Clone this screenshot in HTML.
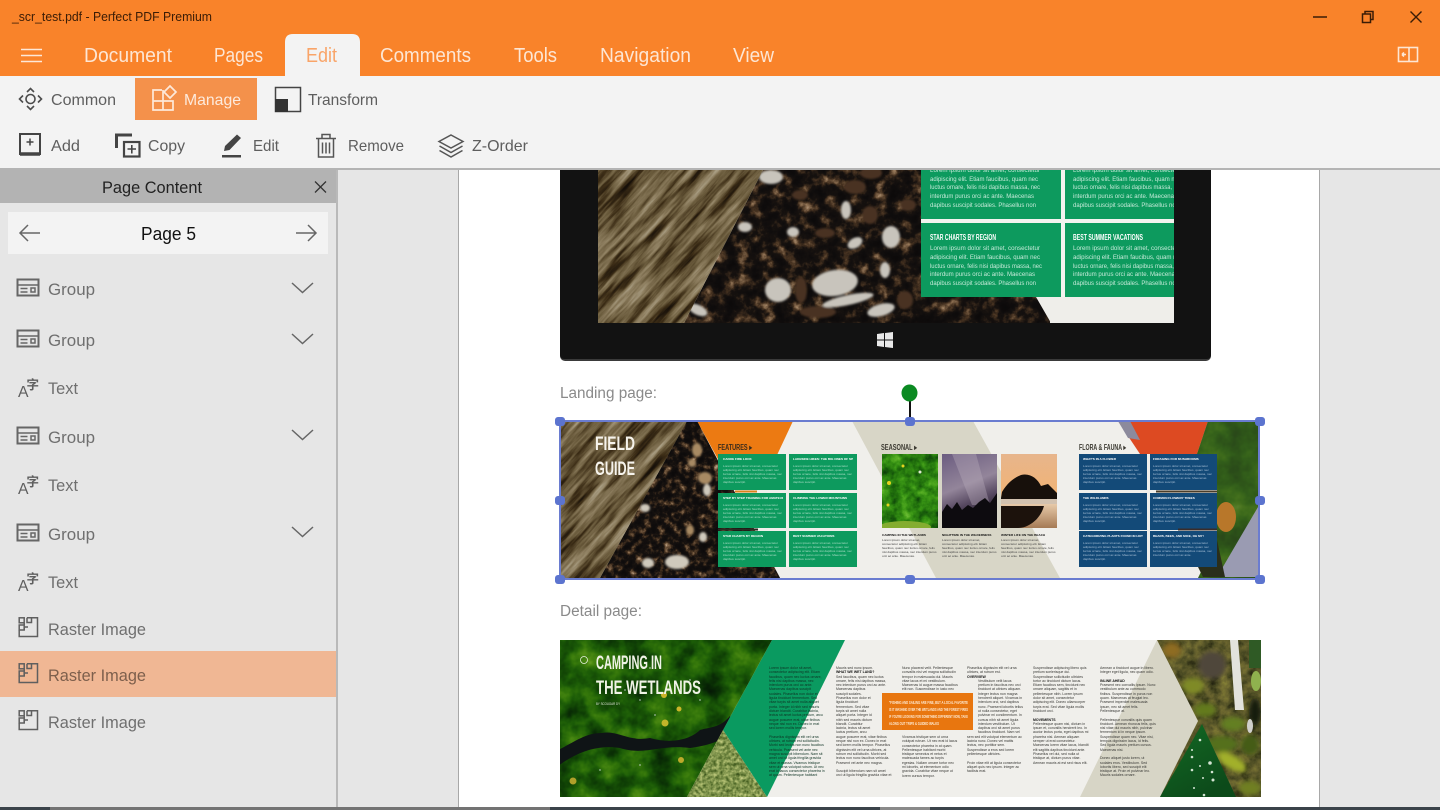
<!DOCTYPE html>
<html><head><meta charset="utf-8"><title>Perfect PDF Premium</title>
<style>
html,body{margin:0;padding:0;background:#e6e6e6;width:1440px;height:810px;overflow:hidden;font-family:"Liberation Sans",sans-serif}
svg{position:absolute;left:0;top:0}
svg text{font-family:"Liberation Sans",sans-serif}
.n{font-family:"Liberation Sans Narrow","Liberation Sans",sans-serif!important}
#tiny{position:absolute;left:0;top:0;width:1440px;height:810px;filter:blur(.35px)}
.c{position:absolute;width:60px;height:32px;overflow:hidden;font-size:3.1px;line-height:4.1px;color:#a9dcc4}
.c b{display:block;color:#fff;font-size:3.1px;line-height:4px;margin-bottom:3px;white-space:nowrap}
.u{color:#a6bdd4}
.k{position:absolute;overflow:hidden;font-size:3.1px;line-height:4px;color:#444;width:55px;height:30px}
.k b{display:block;color:#111;white-space:nowrap;margin-bottom:1px}
.d{position:absolute;overflow:hidden;font-size:3.5px;line-height:4.3px;color:#383835;width:56px;height:111px}
.d b{color:#111}
</style></head><body>
<svg width="1440" height="810" viewBox="0 0 1440 810" xmlns="http://www.w3.org/2000/svg">
<defs>
<filter id="bark" x="0" y="0" width="1" height="1" color-interpolation-filters="sRGB"><feTurbulence type="fractalNoise" baseFrequency=".014 .14" numOctaves="5" seed="3"/><feColorMatrix values="1 0 0 0 0 1 0 0 0 0 1 0 0 0 0 0 0 0 0 1"/><feComponentTransfer><feFuncR type="table" tableValues=".06 .1 .24 .42 .56 .68 .8"/><feFuncG type="table" tableValues=".05 .07 .18 .36 .5 .64 .76"/><feFuncB type="table" tableValues=".03 .04 .09 .24 .38 .54 .68"/></feComponentTransfer></filter>
<filter id="peb" x="0" y="0" width="1" height="1" color-interpolation-filters="sRGB"><feTurbulence type="fractalNoise" baseFrequency=".08" numOctaves="4" seed="8"/><feColorMatrix values="1 0 0 0 0 1 0 0 0 0 1 0 0 0 0 0 0 0 0 1"/><feComponentTransfer><feFuncR type="table" tableValues=".04 .05 .06 .09 .28 .58 .85"/><feFuncG type="table" tableValues=".04 .04 .05 .07 .2 .46 .8"/><feFuncB type="table" tableValues=".04 .04 .05 .06 .13 .34 .75"/></feComponentTransfer></filter>
<filter id="peb2" x="0" y="0" width="1" height="1" color-interpolation-filters="sRGB"><feTurbulence type="fractalNoise" baseFrequency=".14" numOctaves="4" seed="8"/><feColorMatrix values="1 0 0 0 0 1 0 0 0 0 1 0 0 0 0 0 0 0 0 1"/><feComponentTransfer><feFuncR type="table" tableValues=".04 .05 .06 .09 .28 .58 .85"/><feFuncG type="table" tableValues=".04 .04 .05 .07 .2 .46 .8"/><feFuncB type="table" tableValues=".04 .04 .05 .06 .13 .34 .75"/></feComponentTransfer></filter>
<filter id="moss" x="0" y="0" width="1" height="1" color-interpolation-filters="sRGB"><feTurbulence type="fractalNoise" baseFrequency=".04" numOctaves="4" seed="5"/><feColorMatrix values="1 0 0 0 0 1 0 0 0 0 1 0 0 0 0 0 0 0 0 1"/><feComponentTransfer><feFuncR type="table" tableValues=".02 .03 .06 .11 .2 .32 .5"/><feFuncG type="table" tableValues=".08 .15 .25 .36 .46 .56 .68"/><feFuncB type="table" tableValues=".02 .02 .02 .03 .04 .08 .26"/></feComponentTransfer></filter>
<filter id="moss2" x="0" y="0" width="1" height="1" color-interpolation-filters="sRGB"><feTurbulence type="fractalNoise" baseFrequency=".09" numOctaves="4" seed="14"/><feColorMatrix values="1 0 0 0 0 1 0 0 0 0 1 0 0 0 0 0 0 0 0 1"/><feComponentTransfer><feFuncR type="table" tableValues=".03 .06 .13 .22 .36 .6"/><feFuncG type="table" tableValues=".16 .28 .44 .58 .7 .82"/><feFuncB type="table" tableValues=".03 .04 .05 .08 .15 .4"/></feComponentTransfer></filter>
<filter id="flw" x="0" y="0" width="1" height="1" color-interpolation-filters="sRGB"><feTurbulence type="fractalNoise" baseFrequency=".3" numOctaves="2" seed="2"/><feColorMatrix values="1 0 0 0 0 1 0 0 0 0 1 0 0 0 0 0 0 0 0 1"/><feComponentTransfer><feFuncR type="table" tableValues=".15 .3 .5 .7 .85"/><feFuncG type="table" tableValues=".22 .4 .58 .75 .85"/><feFuncB type="table" tableValues=".08 .15 .3 .45 .6"/></feComponentTransfer></filter>
<filter id="rock" x="0" y="0" width="1" height="1" color-interpolation-filters="sRGB"><feTurbulence type="fractalNoise" baseFrequency=".1" numOctaves="4" seed="11"/><feColorMatrix values="1 0 0 0 0 1 0 0 0 0 1 0 0 0 0 0 0 0 0 1"/><feComponentTransfer><feFuncR type="table" tableValues=".1 .18 .3 .4 .48 .6"/><feFuncG type="table" tableValues=".1 .18 .3 .38 .46 .6"/><feFuncB type="table" tableValues=".05 .08 .14 .18 .2 .24"/></feComponentTransfer></filter>
<filter id="sb" x="-30%" y="-30%" width="160%" height="160%"><feGaussianBlur stdDeviation="1.1"/></filter>
<filter id="sb2" x="-30%" y="-30%" width="160%" height="160%"><feGaussianBlur stdDeviation="2.5"/></filter>
<clipPath id="docClip"><rect x="459" y="170" width="860" height="640"/></clipPath>
<clipPath id="tBark"><polygon points="598,170 763,170 684,323 598,323"/></clipPath>
<clipPath id="tPeb"><polygon points="763,170 1050,170 1050,323 684,323"/></clipPath>
<clipPath id="lBark"><polygon points="560,421 687,421 600,578 560,578"/></clipPath>
<clipPath id="dMoss"><polygon points="560,640 772,640 723,730 687,797 560,797"/></clipPath>
<clipPath id="dFlw"><polygon points="723,730 767,797 687,797"/></clipPath>
<clipPath id="dRight"><polygon points="1157,640 1261,640 1261,797 1160,797 1198,721"/></clipPath>
<clipPath id="lMoss"><rect x="882" y="454" width="56" height="74"/></clipPath>
<clipPath id="lRight"><polygon points="1208,421 1259,421 1259,578 1198,578 1217,540 1217,454 1197,454"/></clipPath>
<linearGradient id="sky" x1="0" y1="0" x2=".3" y2="1"><stop offset="0" stop-color="#6b5c80"/><stop offset=".5" stop-color="#93859a"/><stop offset=".75" stop-color="#55475f"/><stop offset="1" stop-color="#221c26"/></linearGradient>
<linearGradient id="sun" x1="0" y1="0" x2="0" y2="1"><stop offset="0" stop-color="#e7b58c"/><stop offset=".5" stop-color="#f0b477"/><stop offset=".68" stop-color="#e6c9a8"/><stop offset="1" stop-color="#a57a55"/></linearGradient>
<linearGradient id="leaf" x1="0" y1="0" x2=".6" y2="1"><stop offset="0" stop-color="#136a24"/><stop offset="1" stop-color="#0c4a1a"/></linearGradient>
<g id="ig" fill="none" stroke="#666"><rect x="1" y="1" width="21" height="16" stroke-width="2"/><path d="M2 6.500H21M4 10H11M4 13.500H11" stroke-width="1.600"/><rect x="14.500" y="9.500" width="4" height="4" stroke-width="1.500"/></g>
<g id="ir" fill="none" stroke="#5f5f5f" stroke-width="1.500"><path d="M9 .8H19.500V19.500H1.200V13"/><rect x="1.200" y=".8" width="5" height="5"/><rect x="1.200" y="8" width="5" height="5"/><path d="M6.200 5.800V8M9 .8V5.500H13.500V.8M6.200 13V10H10"/></g>
<g id="ch"><path d="M0 0L10.500 9.500L21 0" fill="none" stroke="#666" stroke-width="1.500"/></g>
</defs>

<rect width="1440" height="810" fill="#e6e6e6"/>
<rect x="459" y="170" width="860" height="640" fill="#fff"/>
<rect x="458" y="170" width="1" height="640" fill="#a8a8a8"/>
<rect x="1319" y="170" width="1" height="640" fill="#a8a8a8"/>

<g clip-path="url(#docClip)" style="filter:blur(.35px)">
  <rect x="560" y="100" width="651" height="261" rx="5" fill="#3a3a3a"/>
  <rect x="560" y="100" width="651" height="259" rx="4" fill="#121212"/>
  <rect x="598" y="170" width="576" height="153" fill="#f0efeb"/>
  <g clip-path="url(#tPeb)">
    <rect x="680" y="170" width="370" height="153" filter="url(#peb)"/>
    <g filter="url(#sb)">
      <g fill="#4a3320">
        <ellipse cx="801" cy="290" rx="6" ry="13"/><ellipse cx="855" cy="187" rx="11" ry="7"/><ellipse cx="871" cy="173" rx="11" ry="6"/><ellipse cx="825" cy="233" rx="10" ry="5"/><ellipse cx="905" cy="300" rx="8" ry="9"/><ellipse cx="800" cy="195" rx="8" ry="5"/><ellipse cx="870" cy="215" rx="8" ry="9"/><ellipse cx="908" cy="205" rx="8" ry="6"/><ellipse cx="818" cy="312" rx="18" ry="6"/>
      </g>
      <g fill="#c8c4bc">
        <ellipse cx="771" cy="177" rx="12" ry="7"/><ellipse cx="846" cy="210" rx="5" ry="9"/><ellipse cx="891" cy="237" rx="9" ry="11"/><ellipse cx="855" cy="243" rx="8" ry="5" transform="rotate(-30 855 243)"/><ellipse cx="885" cy="270" rx="5" ry="8"/><ellipse cx="835" cy="283" rx="23" ry="13" transform="rotate(-8 835 283)"/><ellipse cx="778" cy="290" rx="13" ry="12"/><ellipse cx="848" cy="300" rx="26" ry="5" transform="rotate(-12 848 300)"/><ellipse cx="698" cy="310" rx="10" ry="5" transform="rotate(25 698 310)"/><ellipse cx="881" cy="310" rx="14" ry="6" transform="rotate(-15 881 310)"/><ellipse cx="745" cy="227" rx="7" ry="5"/><ellipse cx="793" cy="232" rx="6" ry="5"/>
      </g>
    </g>
  </g>
  <polygon points="1036,297 1174,297 1174,323 1051,323" fill="#efeeea"/>
  <g clip-path="url(#tBark)"><rect x="400" y="50" width="540" height="400" transform="rotate(-48 670 250)" filter="url(#bark)"/></g>
  <rect x="921" y="219" width="253" height="4" fill="#f3f3ef"/>
  <rect x="921" y="170" width="140" height="49" fill="#0d9a5e"/>
  <rect x="1065" y="170" width="109" height="49" fill="#0d9a5e"/>
  <rect x="921" y="223" width="140" height="74" fill="#0d9a5e"/>
  <rect x="1065" y="223" width="109" height="74" fill="#0d9a5e"/>
  <rect x="1061" y="170" width="4" height="127" fill="#f3f3ef"/>
  <g fill="#c6ead9" font-size="6.600">
    <text x="930" y="172" textLength="110" lengthAdjust="spacingAndGlyphs">Lorem ipsum dolor sit amet, consectetur</text>
    <text x="930" y="181" textLength="108" lengthAdjust="spacingAndGlyphs">adipiscing elit. Etiam faucibus, quam nec</text>
    <text x="930" y="189" textLength="110" lengthAdjust="spacingAndGlyphs">luctus ornare, felis nisi dapibus massa, nec</text>
    <text x="930" y="198" textLength="104" lengthAdjust="spacingAndGlyphs">interdum purus orci ac ante. Maecenas</text>
    <text x="930" y="207" textLength="106" lengthAdjust="spacingAndGlyphs">dapibus suscipit sodales. Phasellus non</text>
    <text x="1073" y="172" textLength="110" lengthAdjust="spacingAndGlyphs">Lorem ipsum dolor sit amet, consectetur</text>
    <text x="1073" y="181" textLength="108" lengthAdjust="spacingAndGlyphs">adipiscing elit. Etiam faucibus, quam nec</text>
    <text x="1073" y="189" textLength="110" lengthAdjust="spacingAndGlyphs">luctus ornare, felis nisi dapibus massa, nec</text>
    <text x="1073" y="198" textLength="104" lengthAdjust="spacingAndGlyphs">interdum purus orci ac ante. Maecenas</text>
    <text x="1073" y="207" textLength="106" lengthAdjust="spacingAndGlyphs">dapibus suscipit sodales. Phasellus non</text>
    <text x="930" y="250" textLength="110" lengthAdjust="spacingAndGlyphs">Lorem ipsum dolor sit amet, consectetur</text>
    <text x="930" y="259" textLength="110" lengthAdjust="spacingAndGlyphs">adipiscing elit. Etiam faucibus, quam nec</text>
    <text x="930" y="268" textLength="112" lengthAdjust="spacingAndGlyphs">luctus ornare, felis nisi dapibus massa, nec</text>
    <text x="930" y="276" textLength="105" lengthAdjust="spacingAndGlyphs">interdum purus orci ac ante. Maecenas</text>
    <text x="930" y="285" textLength="106" lengthAdjust="spacingAndGlyphs">dapibus suscipit sodales. Phasellus non</text>
    <text x="1073" y="250" textLength="110" lengthAdjust="spacingAndGlyphs">Lorem ipsum dolor sit amet, consectetur</text>
    <text x="1073" y="259" textLength="110" lengthAdjust="spacingAndGlyphs">adipiscing elit. Etiam faucibus, quam nec</text>
    <text x="1073" y="268" textLength="112" lengthAdjust="spacingAndGlyphs">luctus ornare, felis nisi dapibus massa, nec</text>
    <text x="1073" y="276" textLength="105" lengthAdjust="spacingAndGlyphs">interdum purus orci ac ante. Maecenas</text>
    <text x="1073" y="285" textLength="106" lengthAdjust="spacingAndGlyphs">dapibus suscipit sodales. Phasellus non</text>
  </g>
  <rect x="1174" y="170" width="37" height="153" fill="#121212"/>
  <g fill="#fff" font-size="8" font-weight="bold">
    <text class="n" x="930" y="240" textLength="66" lengthAdjust="spacingAndGlyphs">STAR CHARTS BY REGION</text>
    <text class="n" x="1073" y="240" textLength="70" lengthAdjust="spacingAndGlyphs">BEST SUMMER VACATIONS</text>
  </g>
  <g fill="#e8e8e8"><polygon points="877,334 884,333 884,339.500 877,339.500"/><polygon points="885,333 893,332 893,339.500 885,339.500"/><polygon points="877,340.500 884,340.500 884,347 877,346"/><polygon points="885,340.500 893,340.500 893,348 885,347"/></g>

  <rect x="560" y="421" width="699" height="157" fill="#f0efeb"/>
  <polygon points="852,421 973,421 1060,578 936,578" fill="#d8d6c7"/>
  <polygon points="697,421 793,421 770,470 735,490" fill="#ec7a12"/>
  <polygon points="687,421 697,421 780,578 600,578" fill="#151311"/>
  <clipPath id="lPeb"><polygon points="687,421 697,421 780,578 600,578"/></clipPath>
  <g clip-path="url(#lPeb)"><rect x="590" y="421" width="195" height="157" filter="url(#peb2)"/>
    <g filter="url(#sb)">
      <g fill="#a88a63"><ellipse cx="697" cy="450" rx="5" ry="7"/><ellipse cx="705" cy="478" rx="7" ry="6"/><ellipse cx="692" cy="463" rx="4" ry="4"/><ellipse cx="690" cy="530" rx="4" ry="5"/></g>
      <g fill="#cfc9bc"><ellipse cx="677" cy="562" rx="12" ry="7"/><ellipse cx="648" cy="563" rx="6" ry="5"/><ellipse cx="645" cy="508" rx="5" ry="4"/><ellipse cx="703" cy="537" rx="4" ry="5"/><ellipse cx="707" cy="490" rx="4" ry="6"/></g>
    </g>
  </g>
  <g clip-path="url(#lBark)"><rect x="420" y="340" width="400" height="320" transform="rotate(-48 620 500)" filter="url(#bark)"/></g>
  <g fill="#0d9a5e">
    <rect x="718" y="454" width="68" height="36"/><rect x="789" y="454" width="68" height="36"/>
    <rect x="718" y="493" width="68" height="35"/><rect x="789" y="493" width="68" height="35"/>
    <rect x="718" y="531" width="68" height="36"/><rect x="789" y="531" width="68" height="36"/>
  </g>
  <rect x="735" y="490.500" width="22" height="2" fill="#d9831c"/>
  <rect x="718" y="528.500" width="40" height="2" fill="#2b2a22"/>
  <g clip-path="url(#lMoss)"><rect x="882" y="454" width="56" height="74" filter="url(#moss2)"/><ellipse cx="905" cy="527" rx="26" ry="6" fill="#84ad30"/><circle cx="889" cy="483" r="2" fill="#e5d31f"/><circle cx="903" cy="466" r="1.500" fill="#e5d31f"/><circle cx="888" cy="505" r="1.500" fill="#e5d31f"/><circle cx="920" cy="472" r="1.500" fill="#dfe9d0"/></g>
  <rect x="942" y="454" width="55" height="74" fill="url(#sky)"/>
  <polygon points="952,454 976,454 990,505 972,505" fill="#b6abb8" opacity=".4"/>
  <polygon points="942,528 942,512 947,504 952,509 957,502 962,510 968,505 973,508 979,502 985,498 990,503 997,493 997,528" fill="#0d0b0f"/>
  <rect x="1001" y="454" width="56" height="74" fill="url(#sun)"/>
  <path d="M1001 498 L1002 492 C1008 482 1014 478 1021 475 C1030 473 1037 478 1041 486 L1048 484 L1057 493 V499 H1001Z" fill="#17100b"/>
  <rect x="1001" y="499" width="56" height="5" fill="#d2c2b0"/>
  <path d="M1001 506 H1044 C1040 520 1028 528 1018 528 H1001Z" fill="#1c120c"/>
  <polygon points="1118,421 1208,421 1197,454 1140,454" fill="#dd4a22"/>
  <polygon points="1118,421 1130,421 1140,440 1128,438" fill="#8c8a9c"/>
  <g clip-path="url(#lRight)"><rect x="1190" y="421" width="70" height="160" fill="#46622a"/><rect x="1190" y="421" width="70" height="160" filter="url(#moss)" opacity=".45"/><ellipse cx="1226" cy="517" rx="10" ry="15" fill="#b8772a"/></g>
  <polygon points="1217,577 1258,507 1258,577" fill="#9a9bb2"/>
  <polygon points="1198,567 1217,540 1225,577 1203,577" fill="#2a2e1a"/>
  <g fill="#134a78">
    <rect x="1079" y="454" width="68" height="36"/><rect x="1150" y="454" width="67" height="36"/>
    <rect x="1079" y="493" width="68" height="37"/><rect x="1150" y="493" width="67" height="37"/>
    <rect x="1079" y="531" width="68" height="36"/><rect x="1150" y="531" width="67" height="36"/>
  </g>
  <rect x="1156" y="490.500" width="61" height="2" fill="#4a3d2a"/>
  <rect x="1178" y="528.500" width="39" height="2" fill="#3a2c2a"/>
  <text class="n" x="595" y="450" fill="#f6f3ec" font-size="19" font-weight="bold" textLength="40" lengthAdjust="spacingAndGlyphs">FIELD</text>
  <text class="n" x="595" y="475" fill="#f6f3ec" font-size="19" font-weight="bold" textLength="40" lengthAdjust="spacingAndGlyphs">GUIDE</text>
  <text class="n" x="718" y="450" fill="#3a2c1c" font-size="8" font-weight="bold" textLength="34" lengthAdjust="spacingAndGlyphs">FEATURES ▸</text>
  <text class="n" x="881" y="450" fill="#3c3a32" font-size="8" font-weight="bold" textLength="36" lengthAdjust="spacingAndGlyphs">SEASONAL ▸</text>
  <text class="n" x="1079" y="450" fill="#3c3a32" font-size="8" font-weight="bold" textLength="47" lengthAdjust="spacingAndGlyphs">FLORA &amp; FAUNA ▸</text>

  <rect x="560" y="640" width="701" height="157" fill="#f0efeb"/>
  <polygon points="1157,640 1198,721 1160,797 1080,797" fill="#d7d5c6"/>
  <polygon points="772,640 845,640 767,797 723,730" fill="#0a9a60"/>
  <g clip-path="url(#dMoss)">
    <rect x="560" y="640" width="215" height="157" filter="url(#moss)"/>
    <path d="M558 750 C575 742 585 733 602 733 C618 730 628 742 650 738 C670 744 690 740 700 730 C710 727 720 728 730 716 L735 730 C722 742 705 746 690 748 C660 744 645 756 620 748 C600 745 580 750 558 766Z" fill="#0f1416"/>
    <g fill="#cfd8d8" opacity=".55"><circle cx="650" cy="668" r="1"/><circle cx="690" cy="680" r="1"/><circle cx="640" cy="700" r="1"/><circle cx="700" cy="700" r="1"/><circle cx="655" cy="715" r="1"/><circle cx="625" cy="690" r="1"/><circle cx="640" cy="765" r="1"/><circle cx="600" cy="770" r="1"/></g>
    <circle cx="664" cy="695" r="3" fill="#cbb52a"/><circle cx="679" cy="709" r="2.500" fill="#cbb52a"/><circle cx="665" cy="723" r="3.500" fill="#c2b52a"/><circle cx="681" cy="760" r="3" fill="#bda92b"/><circle cx="573" cy="781" r="3.500" fill="#b0a02a"/>
  </g>
  <g clip-path="url(#dFlw)"><rect x="685" y="728" width="84" height="70" filter="url(#flw)"/></g>
  <g clip-path="url(#dRight)">
    <rect x="1150" y="640" width="112" height="160" filter="url(#rock)"/>
    <g filter="url(#sb2)">
      <ellipse cx="1172" cy="650" rx="9" ry="8" fill="#8e6c24"/>
      <ellipse cx="1193" cy="686" rx="11" ry="8" fill="#7f8a26"/>
      <ellipse cx="1205" cy="710" rx="11" ry="7" fill="#647a1f"/>
      <ellipse cx="1233" cy="724" rx="12" ry="7" fill="#647f22"/>
      <ellipse cx="1222" cy="744" rx="16" ry="8" fill="#55701d"/>
      <ellipse cx="1232" cy="762" rx="16" ry="7" transform="rotate(30 1232 762)" fill="#a2b02b"/>
      <ellipse cx="1250" cy="745" rx="9" ry="10" fill="#445c18"/>
      <ellipse cx="1250" cy="788" rx="11" ry="7" fill="#6f7f24"/>
      <ellipse cx="1255" cy="712" rx="6" ry="14" fill="#161a10"/>
      <ellipse cx="1212" cy="665" rx="14" ry="14" fill="#50463a"/>
    </g>
    <polygon points="1230,640 1238,640 1244,710 1235,710" fill="#e2e2dc"/>
    <rect x="1249" y="640" width="12" height="28" fill="#2f5a25"/>
    <ellipse cx="1256" cy="681" rx="5" ry="10" fill="#8fb14e"/>
    <ellipse cx="1250" cy="726" rx="3" ry="7" fill="#d0d0cc"/>
  </g>
  <polygon points="1202,724 1160,797 1236,797" fill="url(#leaf)"/>
  <g fill="#d4e4d4"><circle cx="1200" cy="740" r="1.300"/><circle cx="1192" cy="750" r="1"/><circle cx="1192" cy="757" r="1.300"/><circle cx="1192" cy="770" r="1.300"/><circle cx="1210" cy="763" r="1.800"/><circle cx="1212" cy="772" r="1.300"/><circle cx="1213" cy="780" r="1.500"/><circle cx="1200" cy="766" r="1"/><circle cx="1203" cy="778" r="1"/><circle cx="1204" cy="795" r="1.300"/><circle cx="1194" cy="788" r="1"/></g>
  <rect x="882" y="693" width="91" height="37" fill="#e8760f"/>
  <circle cx="584" cy="660" r="3.500" fill="none" stroke="#e8efe0" stroke-width=".8"/>
  <text class="n" x="596" y="669" fill="#f0f3e6" font-size="19" font-weight="bold" textLength="66" lengthAdjust="spacingAndGlyphs">CAMPING IN</text>
  <text class="n" x="596" y="694" fill="#f0f3e6" font-size="19" font-weight="bold" textLength="105" lengthAdjust="spacingAndGlyphs">THE WETLANDS</text>
  <text x="596" y="705" fill="#e2e8d8" font-size="3.600" textLength="24" lengthAdjust="spacingAndGlyphs">BY SCOUGAR DY</text>
  <g fill="#fde8d0" font-size="4.200" font-weight="bold">
    <text x="889" y="704" textLength="79" lengthAdjust="spacingAndGlyphs">"FISHING AND SAILING ARE FINE, BUT A LOCAL FAVORITE</text>
    <text x="889" y="711" textLength="79" lengthAdjust="spacingAndGlyphs">IS IT WASHING OVER THE WETLANDS AND THE FOREST FIRES</text>
    <text x="889" y="718" textLength="79" lengthAdjust="spacingAndGlyphs">IF YOU'RE LOOKING FOR SOMETHING DIFFERENT NOW, TAKE</text>
    <text x="889" y="725" textLength="50" lengthAdjust="spacingAndGlyphs">ALONG OUT TRIPS &amp; GUIDED WALKS</text>
  </g>
</g>

<rect y="807" width="1440" height="3" fill="#3b434a"/>
<rect x="50" y="807" width="500" height="3" fill="#737373"/>
<rect x="880" y="807" width="50" height="3" fill="#8a8a8a"/>

<rect x="560" y="421" width="699" height="158" fill="none" stroke="#6a7cd0" stroke-width="2"/>
<path d="M910 400V421" stroke="#111" stroke-width="2"/>
<ellipse cx="909.500" cy="393" rx="8" ry="8.500" fill="#0b8a22"/>
<g fill="#5c74cf">
  <rect x="555" y="417" width="10" height="9" rx="3"/><rect x="905" y="417" width="10" height="9" rx="3"/><rect x="1255" y="417" width="10" height="9" rx="3"/>
  <rect x="555" y="496" width="10" height="9" rx="3"/><rect x="1255" y="496" width="10" height="9" rx="3"/>
  <rect x="555" y="575" width="10" height="9" rx="3"/><rect x="905" y="575" width="10" height="9" rx="3"/><rect x="1255" y="575" width="10" height="9" rx="3"/>
</g>
<text x="560" y="398" fill="#8a8a8a" font-size="15.500" textLength="97" lengthAdjust="spacingAndGlyphs">Landing page:</text>
<text x="560" y="616" fill="#8a8a8a" font-size="15.500" textLength="82" lengthAdjust="spacingAndGlyphs">Detail page:</text>

<rect width="1440" height="76" fill="#f9832a"/>
<text x="12" y="21" font-size="12.500" fill="#3a1c06" textLength="200" lengthAdjust="spacingAndGlyphs">_scr_test.pdf - Perfect PDF Premium</text>
<path d="M1313 17H1327" stroke="#3a1c06" stroke-width="1.500"/>
<g fill="none" stroke="#3a1c06" stroke-width="1.500"><rect x="1362.500" y="14" width="8" height="8.500"/><path d="M1365 13.500V11.500H1373V19.500H1371"/><path d="M1410.500 11.500L1421.500 22.500M1421.500 11.500L1410.500 22.500" stroke-width="1.400"/></g>
<path d="M21 49.500H42M21 55.500H42M21 61.500H42" stroke="#fde8d8" stroke-width="1.500"/>
<path d="M285 76V42Q285 34 293 34H352Q360 34 360 42V76Z" fill="#f3f3f3"/>
<g font-size="20" fill="#fde6d4">
  <text x="84" y="62" textLength="88" lengthAdjust="spacingAndGlyphs">Document</text>
  <text x="214" y="62" textLength="49" lengthAdjust="spacingAndGlyphs">Pages</text>
  <text x="380" y="62" textLength="91" lengthAdjust="spacingAndGlyphs">Comments</text>
  <text x="514" y="62" textLength="43" lengthAdjust="spacingAndGlyphs">Tools</text>
  <text x="600" y="62" textLength="91" lengthAdjust="spacingAndGlyphs">Navigation</text>
  <text x="733" y="62" textLength="41" lengthAdjust="spacingAndGlyphs">View</text>
  <text x="306" y="62" textLength="31" lengthAdjust="spacingAndGlyphs" fill="#f9a468">Edit</text>
</g>
<g fill="none" stroke="#fde6d4" stroke-width="1.600"><rect x="1398.500" y="47.500" width="19" height="14"/><path d="M1409 47.500V61.500M1402 54.500H1406M1402 54.500L1404 52.500M1402 54.500L1404 56.500"/></g>

<rect y="76" width="1440" height="92" fill="#f3f3f3"/>
<rect y="168" width="1440" height="2" fill="#b4b4b4"/>
<rect x="135" y="78" width="122" height="42" fill="#f4914b"/>
<g fill="none" stroke="#4d4d4d" stroke-width="1.600">
  <circle cx="30.500" cy="99" r="4.500"/>
  <path d="M27 92L30.500 88.500L34 92M27 106L30.500 109.500L34 106M23 95.500L19.500 99L23 102.500M38 95.500L41.500 99L38 102.500"/>
</g>
<g fill="none" stroke="#fde9da" stroke-width="1.700">
  <path d="M162 90H153V110H173V101H153M163 90V110M163 101H173"/>
  <path d="M170 86L176 92L170 98L164 92Z"/>
</g>
<rect x="275.500" y="87.500" width="25" height="24" fill="none" stroke="#444" stroke-width="1.500"/>
<rect x="275" y="99" width="13" height="13" fill="#333"/>
<g fill="none" stroke="#444">
  <path d="M20 154V134H40V154Z" stroke-width="2"/><path d="M20 154H40" stroke-width="3.500"/><path d="M26.500 142H33.500M30 138.500V145.500" stroke-width="1.500"/>
  <path d="M116.500 148V135H132" stroke-width="3"/><rect x="124" y="142" width="15.500" height="14.500" stroke-width="2.200"/><path d="M127.500 149H136M131.800 145V153.500" stroke-width="1.600"/>
</g>
<path d="M224 151L225 146L237 134.500L241 138L229.500 150Z" fill="#444"/>
<rect x="222" y="155" width="19" height="2.500" fill="#444"/>
<g fill="none" stroke="#555" stroke-width="1.500">
  <path d="M316 138.500H336M322 138V134.500H330V138M318.500 139V157H333.500V139M322.500 142.500V153.500M326 142.500V153.500M329.500 142.500V153.500"/>
  <path d="M451 135L463 141.500L451 148L439 141.500Z"/><path d="M439.500 146L451 152.500L462.500 146M439.500 150.500L451 157L462.500 150.500"/>
</g>
<g font-size="16" fill="#5e5e5e">
  <text x="51" y="105" textLength="65" lengthAdjust="spacingAndGlyphs">Common</text>
  <text x="184" y="105" textLength="57" lengthAdjust="spacingAndGlyphs" fill="#fdeadc">Manage</text>
  <text x="308" y="105" textLength="70" lengthAdjust="spacingAndGlyphs">Transform</text>
  <text x="51" y="151" textLength="29" lengthAdjust="spacingAndGlyphs">Add</text>
  <text x="148" y="151" textLength="37" lengthAdjust="spacingAndGlyphs">Copy</text>
  <text x="253" y="151" textLength="26" lengthAdjust="spacingAndGlyphs">Edit</text>
  <text x="348" y="151" textLength="56" lengthAdjust="spacingAndGlyphs">Remove</text>
  <text x="472" y="151" textLength="56" lengthAdjust="spacingAndGlyphs">Z-Order</text>
</g>

<rect y="170" width="336" height="637" fill="#e6e6e6"/>
<rect x="336" y="170" width="2" height="637" fill="#b9b9b9"/>
<rect y="170" width="336" height="33" fill="#b3b3b3"/>
<text x="102" y="193" font-size="16.500" fill="#222" textLength="100" lengthAdjust="spacingAndGlyphs">Page Content</text>
<path d="M315 181.500L326 192.500M326 181.500L315 192.500" stroke="#333" stroke-width="1.300"/>
<rect x="8" y="212" width="320" height="42" fill="#f3f3f3"/>
<text x="141" y="240" font-size="18" fill="#111" textLength="55" lengthAdjust="spacingAndGlyphs">Page 5</text>
<path d="M40 233H20M28 225L20 233L28 241M296 233H316M308 225L316 233L308 241" fill="none" stroke="#666" stroke-width="1.500"/>
<rect y="651" width="336" height="46" fill="#f0b794"/>
<use href="#ig" x="16.500" y="278.500"/><use href="#ig" x="16.500" y="329.500"/><use href="#ig" x="16.500" y="426.500"/><use href="#ig" x="16.500" y="523.500"/>
<use href="#ch" x="292" y="283"/><use href="#ch" x="292" y="334"/><use href="#ch" x="292" y="430"/><use href="#ch" x="292" y="527"/>
<use href="#ir" x="18" y="617"/><use href="#ir" x="18" y="663"/><use href="#ir" x="18" y="710"/>
<g font-size="17" fill="#6f6f6f">
  <text x="48" y="295" textLength="47" lengthAdjust="spacingAndGlyphs">Group</text>
  <text x="48" y="346" textLength="47" lengthAdjust="spacingAndGlyphs">Group</text>
  <text x="48" y="394" textLength="30" lengthAdjust="spacingAndGlyphs">Text</text>
  <text x="48" y="443" textLength="47" lengthAdjust="spacingAndGlyphs">Group</text>
  <text x="48" y="491" textLength="30" lengthAdjust="spacingAndGlyphs">Text</text>
  <text x="48" y="540" textLength="47" lengthAdjust="spacingAndGlyphs">Group</text>
  <text x="48" y="588" textLength="30" lengthAdjust="spacingAndGlyphs">Text</text>
  <text x="48" y="635" textLength="98" lengthAdjust="spacingAndGlyphs">Raster Image</text>
  <text x="48" y="681" textLength="98" lengthAdjust="spacingAndGlyphs" fill="#7d5f4c">Raster Image</text>
  <text x="48" y="728" textLength="98" lengthAdjust="spacingAndGlyphs">Raster Image</text>
</g>
<g fill="#5f5f5f">
  <text x="18" y="397" font-size="16" textLength="10.500" lengthAdjust="spacingAndGlyphs">A</text>
  <text x="26.500" y="389" font-size="12.500" font-weight="bold" style='font-family:"Noto Sans CJK SC",sans-serif'>字</text>
  <text x="18" y="494" font-size="16" textLength="10.500" lengthAdjust="spacingAndGlyphs">A</text>
  <text x="26.500" y="486" font-size="12.500" font-weight="bold" style='font-family:"Noto Sans CJK SC",sans-serif'>字</text>
  <text x="18" y="591" font-size="16" textLength="10.500" lengthAdjust="spacingAndGlyphs">A</text>
  <text x="26.500" y="583" font-size="12.500" font-weight="bold" style='font-family:"Noto Sans CJK SC",sans-serif'>字</text>
</g>
</svg>

<div id="tiny">
<div class="c" style="left:723px;top:457px"><b>CANOE FIRE LOCK</b>Lorem ipsum dolor sit amet, consectetur adipiscing elit. Etiam faucibus, quam nec luctus ornare, felis nisi dapibus massa, nec interdum purus orci ac ante. Maecenas dapibus suscipit.</div>
<div class="c" style="left:793px;top:457px"><b>LAKESIDE HIKES: THE BIG ONES OF SPRING</b>Lorem ipsum dolor sit amet, consectetur adipiscing elit. Etiam faucibus, quam nec luctus ornare, felis nisi dapibus massa, nec interdum purus orci ac ante. Maecenas dapibus suscipit.</div>
<div class="c" style="left:723px;top:496px"><b>STEP BY STEP TRAINING FOR AMATEUR HIKERS</b>Lorem ipsum dolor sit amet, consectetur adipiscing elit. Etiam faucibus, quam nec luctus ornare, felis nisi dapibus massa, nec interdum purus orci ac ante. Maecenas dapibus suscipit.</div>
<div class="c" style="left:793px;top:496px"><b>CLIMBING THE LOWER MOUNTAINS</b>Lorem ipsum dolor sit amet, consectetur adipiscing elit. Etiam faucibus, quam nec luctus ornare, felis nisi dapibus massa, nec interdum purus orci ac ante. Maecenas dapibus suscipit.</div>
<div class="c" style="left:723px;top:534px"><b>STAR CHARTS BY REGION</b>Lorem ipsum dolor sit amet, consectetur adipiscing elit. Etiam faucibus, quam nec luctus ornare, felis nisi dapibus massa, nec interdum purus orci ac ante. Maecenas dapibus suscipit.</div>
<div class="c" style="left:793px;top:534px"><b>BEST SUMMER VACATIONS</b>Lorem ipsum dolor sit amet, consectetur adipiscing elit. Etiam faucibus, quam nec luctus ornare, felis nisi dapibus massa, nec interdum purus orci ac ante. Maecenas dapibus suscipit.</div>
<div class="c u" style="left:1083px;top:457px"><b>WHAT'S IN A FLOWER</b>Lorem ipsum dolor sit amet, consectetur adipiscing elit. Etiam faucibus, quam nec luctus ornare, felis nisi dapibus massa, nec interdum purus orci ac ante. Maecenas dapibus suscipit.</div>
<div class="c u" style="left:1153px;top:457px"><b>FORAGING FOR MUSHROOMS</b>Lorem ipsum dolor sit amet, consectetur adipiscing elit. Etiam faucibus, quam nec luctus ornare, felis nisi dapibus massa, nec interdum purus orci ac ante. Maecenas dapibus suscipit.</div>
<div class="c u" style="left:1083px;top:496px"><b>THE WILDLANDS</b>Lorem ipsum dolor sit amet, consectetur adipiscing elit. Etiam faucibus, quam nec luctus ornare, felis nisi dapibus massa, nec interdum purus orci ac ante. Maecenas dapibus suscipit.</div>
<div class="c u" style="left:1153px;top:496px"><b>COMMON FLOWERY TREES</b>Lorem ipsum dolor sit amet, consectetur adipiscing elit. Etiam faucibus, quam nec luctus ornare, felis nisi dapibus massa, nec interdum purus orci ac ante. Maecenas dapibus suscipit.</div>
<div class="c u" style="left:1083px;top:534px"><b>CATEGORIZING PLANTS FOUND IN HOT</b>Lorem ipsum dolor sit amet, consectetur adipiscing elit. Etiam faucibus, quam nec luctus ornare, felis nisi dapibus massa, nec interdum purus orci ac ante. Maecenas dapibus suscipit.</div>
<div class="c u" style="left:1153px;top:534px"><b>BEARS, BEES, AND MICE, OH MY!</b>Lorem ipsum dolor sit amet, consectetur adipiscing elit. Etiam faucibus, quam nec luctus ornare, felis nisi dapibus massa, nec interdum purus orci ac ante.</div>

<div class="k" style="left:882px;top:533px"><b>CAMPING IN THE WETLANDS</b>Lorem ipsum dolor sit amet, consectetur adipiscing elit. Etiam faucibus, quam nec luctus ornare, felis nisi dapibus massa, nec interdum purus orci ac ante. Maecenas.</div>
<div class="k" style="left:942px;top:533px"><b>NIGHTTIME IN THE WILDERNESS</b>Lorem ipsum dolor sit amet, consectetur adipiscing elit. Etiam faucibus, quam nec luctus ornare, felis nisi dapibus massa, nec interdum purus orci ac ante. Maecenas.</div>
<div class="k" style="left:1001px;top:533px"><b>WINTER LIFE ON THE BEACH</b>Lorem ipsum dolor sit amet, consectetur adipiscing elit. Etiam faucibus, quam nec luctus ornare, felis nisi dapibus massa, nec interdum purus orci ac ante. Maecenas.</div>

<div class="d" style="left:769px;top:666px;color:#0f3324">Lorem ipsum dolor sit amet, consectetur adipiscing elit. Etiam faucibus, quam nec luctus ornare, felis nisi dapibus massa, nec interdum purus orci ac ante. Maecenas dapibus suscipit sodales. Phasellus non dolor et ligula tincidunt fermentum. Sed vitae turpis sit amet nulla aliquet porta. Integer id nibh sed mauris dictum blandit. Curabitur lacinia, lectus sit amet luctus pretium, arcu augue posuere erat, vitae finibus neque nisl non ex. Donec in erat sed lorem mollis tempor.<br><br>Phasellus dignissim elit vel urna ultrices, at rutrum est sollicitudin. Morbi sed lectus non nunc faucibus vehicula. Praesent vel ante nec magna suscipit bibendum. Nam sit amet orci ut ligula fringilla gravida vitae et massa. Vivamus tristique sem ut urna volutpat rutrum. Ut nec erat id lacus consectetur pharetra in at quam. Pellentesque habitant morbi tristique senectus et netus et malesuada fames ac turpis egestas. Nullam ornare tortor nec mi lobortis.</div>
<div class="d" style="left:836px;top:666px"><i style="float:right;width:0;height:25px"></i><i style="float:right;clear:right;width:18px;height:41px"></i>Mauris sed nunc ipsum.<br><b>WHAT WE WET LAND?</b><br>Sed faucibus, quam nec luctus ornare, felis nisi dapibus massa, nec interdum purus orci ac ante. Maecenas dapibus suscipit sodales. Phasellus non dolor et ligula tincidunt fermentum. Sed vitae turpis sit amet nulla aliquet porta. Integer id nibh sed mauris dictum blandit. Curabitur lacinia, lectus sit amet luctus pretium, arcu augue posuere erat, vitae finibus neque nisl non ex. Donec in erat sed lorem mollis tempor. Phasellus dignissim elit vel urna ultrices, at rutrum est sollicitudin. Morbi sed lectus non nunc faucibus vehicula. Praesent vel ante nec magna.<br><br>Suscipit bibendum nam sit amet orci ut ligula fringilla gravida vitae et massa vivamus.</div>
<div class="d" style="left:902px;top:666px;height:24px">Nunc placerat velit. Pellentesque convallis nisi vel magna sollicitudin tempor in malesuada dui. Mauris vitae lacus et mi vestibulum. Maecenas id augue massa faucibus elit non. Suspendisse in justo nec tortor rhoncus pharetra et at ipsum felis.</div>
<div class="d" style="left:902px;top:735px;height:43px">Vivamus tristique sem ut urna volutpat rutrum. Ut nec erat id lacus consectetur pharetra in at quam. Pellentesque habitant morbi tristique senectus et netus et malesuada fames ac turpis egestas. Nullam ornare tortor nec mi lobortis, at elementum odio gravida. Curabitur vitae neque ut lorem cursus tempor.</div>
<div class="d" style="left:967px;top:666px"><i style="float:left;width:0;height:17px"></i><i style="float:left;clear:left;width:11px;height:49px"></i>Phasellus dignissim elit vel urna ultrices, at rutrum est.<br><b>OVERVIEW</b><br>Vestibulum velit lacus pretium in faucibus nec orci tincidunt at ultrices aliquam. Integer lectus non magna hendrerit aliquet. Vivamus in interdum orci, sed dapibus nunc. Praesent lobortis tellus ut nulla consectetur, eget pulvinar mi condimentum. In cursus nibh sit amet ligula interdum vestibulum. Ut dapibus orci sit amet purus faucibus tincidunt. Nam vel sem sed elit volutpat elementum ac lacinia nunc. Donec vel mattis lectus, nec porttitor sem. Suspendisse a eros sed lorem pellentesque ultricies.<br><br>Proin vitae elit at ligula consectetur aliquet quis nec ipsum. Integer ac facilisis erat.</div>
<div class="d" style="left:1033px;top:666px">Suspendisse adipiscing libero quis pretium scelerisque dui. Suspendisse sollicitudin ultricies tortor ac tincidunt dictum lacus. Etiam faucibus sem, tincidunt nec ornare aliquam, sagittis et in pellentesque nibh. Lorem ipsum dolor sit amet, consectetur adipiscing elit. Donec ullamcorper turpis erat. Sed vitae ligula mollis tincidunt orci.<br><br><b>MOVEMENTS</b><br>Pellentesque quam nisi, dictum in ipsum et, convallis hendrerit leo. In auctor lectus porta, eget dapibus mi pharetra nisl. Aenean aliquam semper ut erat consectetur. Maecenas lorem vitae lacus, blandit elit sagittis dapibus tincidunt ante. Phasellus vel dui, sed nulla ut tristique at, dictum purus vitae. Aenean mauris at est sed risus elit.</div>
<div class="d" style="left:1100px;top:666px">Aenean a tincidunt augue in libero. Integer eget ligula, nec quam odio.<br><br><b>INLINE AHEAD</b><br>Praesent nec convallis ipsum. Nunc vestibulum ante ac commodo finibus. Suspendisse in purus non quam. Maecenas at feugiat leo. Praesent imperdiet malesuada ipsum, nec sit amet felis. Pellentesque at.<br><br>Pellentesque convallis quis quam tincidunt. Aenean rhoncus felis, quis nisl vitae dui mauris nibh, pulvinar fermentum id in neque ipsum. Suspendisse quam nec. Vitae nisi, tempus dignissim lacus, id felis. Sed ligula mauris pretium cursus. Maecenas nisi.<br><br>Donec aliquet justo lorem, ut sodales eros. Vestibulum. Sed lobortis libero, sed suscipit elit tristique at. Proin et pulvinar leo. Mauris sodales ornare.</div>
</div>
</body></html>
